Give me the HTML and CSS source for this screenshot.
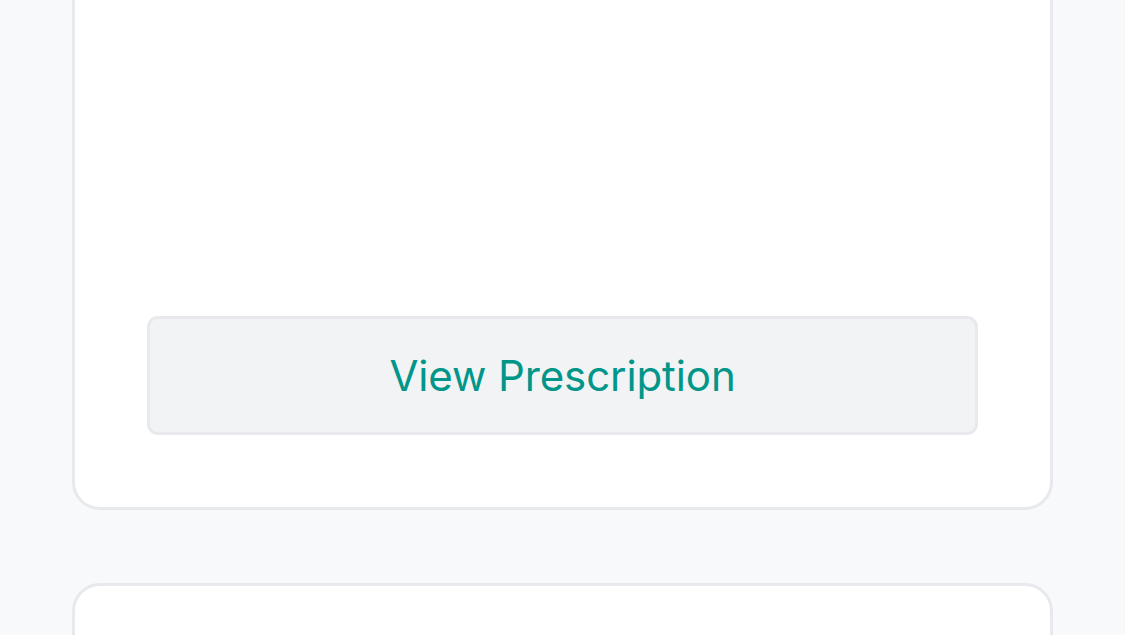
FILE: index.html
```html
<!DOCTYPE html>
<html lang="en">
<head>
<meta charset="utf-8">
<title>Prescription</title>
<link rel="stylesheet" href="styles.css">
</head>
<body>
  <main class="list">
    <section class="card card-first">
      <button class="btn-view" type="button">View Prescription</button>
    </section>
    <section class="card card-next"></section>
  </main>
</body>
</html>
```

FILE: styles.css
```css
html, body {
  margin: 0;
  padding: 0;
  background: #f8f9fa;
  overflow: hidden;
  height: 100%;
}

body {
  font-family: Inter, "Noto Sans", "Liberation Sans", sans-serif;
}

.list {
  display: flex;
  flex-direction: column;
  gap: 73px;
  padding: 0 72px;
}

.card {
  background: #ffffff;
  border: 3px solid #e7e9ec;
  border-radius: 28px;
  box-sizing: border-box;
}

.card-first {
  margin-top: -40px;
  padding: 353px 72px 72px;
  display: flex;
  flex-direction: column;
}

.card-next {
  height: 200px;
}

.btn-view {
  height: 119px;
  width: 100%;
  box-sizing: border-box;
  background: #f2f3f5;
  border: 3px solid #e7e9ec;
  border-radius: 11px;
  color: #00968a;
  font-family: Inter, "Noto Sans", "Liberation Sans", sans-serif;
  font-size: 42px;
  font-weight: 400;
  letter-spacing: -0.1px;
  cursor: pointer;
  padding: 0;
}
```
